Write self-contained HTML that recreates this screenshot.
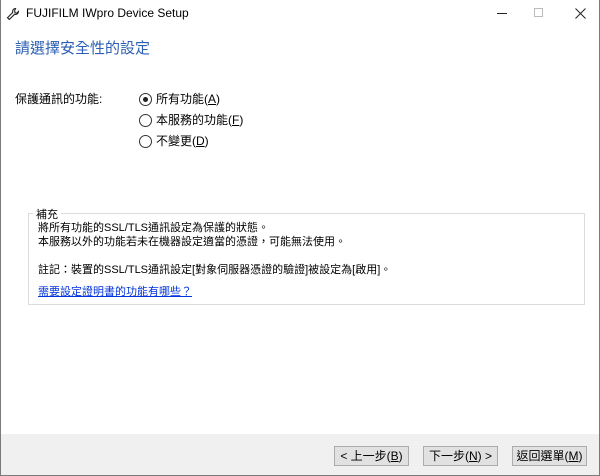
<!DOCTYPE html>
<html><head><meta charset="utf-8"><style>
*{margin:0;padding:0;box-sizing:border-box}
body{width:600px;height:476px;overflow:hidden;background:#fff;font-family:"Liberation Sans","Noto Sans CJK TC",sans-serif;font-size:12px;color:#000;position:relative}
.win{position:absolute;left:0;top:0;width:600px;height:476px;border:1px solid #7a7a7a;border-top:none}
.a{position:absolute;white-space:nowrap}
.radio{position:absolute;width:13px;height:13px;border:1px solid #333;border-radius:50%;background:#fff}
.radio.on::after{content:"";position:absolute;left:3px;top:3px;width:5px;height:5px;border-radius:50%;background:#222}
u{text-decoration:underline}
.footer{position:absolute;left:1px;top:434px;width:598px;height:41px;background:#f0f0f0}
.btn{position:absolute;top:446px;width:75px;height:20px;border:1px solid #adadad;background:#e1e1e1;font-size:12px;text-align:center;line-height:18px}
</style></head><body>
<div class="win"></div>
<svg class="a" style="left:6px;top:7px" width="14" height="14" viewBox="0 0 14 14"><path d="M9.5 1.5a3 3 0 0 0-2.8 4L1.5 10.7l1.8 1.8 5.2-5.2a3 3 0 0 0 4-2.8l-1.7 1.7-1.8-.4-.4-1.8z" fill="none" stroke="#222" stroke-width="1.1"/></svg>
<div class="a" style="left:26px;top:6px;font-size:12px">FUJIFILM IWpro Device Setup</div>
<div class="a" style="left:497px;top:13px;width:10px;height:1px;background:#222"></div>
<div class="a" style="left:534px;top:8px;width:9px;height:9px;border:1px solid #bbb"></div>
<svg class="a" style="left:575px;top:8px" width="11" height="11"><path d="M0.5 0.5l10 10M10.5 0.5l-10 10" stroke="#222" stroke-width="1"/></svg>
<div class="a" style="left:15px;top:37px;font-size:15px;color:#2c5fb4">請選擇安全性的設定</div>
<div class="a" style="left:15px;top:90px">保護通訊的功能:</div>
<div class="radio on" style="left:139px;top:93px"></div>
<div class="a" style="left:156px;top:90px">所有功能(<u>A</u>)</div>
<div class="radio" style="left:139px;top:114px"></div>
<div class="a" style="left:156px;top:111px">本服務的功能(<u>F</u>)</div>
<div class="radio" style="left:139px;top:135px"></div>
<div class="a" style="left:156px;top:132px">不變更(<u>D</u>)</div>
<div class="a" style="left:28px;top:213px;width:557px;height:92px;border:1px solid #dcdcdc"></div>
<div class="a" style="left:33px;top:206px;background:#fff;padding:0 3px;font-size:11px">補充</div>
<div class="a" style="left:38px;top:221px;font-size:11px;line-height:14px">將所有功能的SSL/TLS通訊設定為保護的狀態。<br>本服務以外的功能若未在機器設定適當的憑證，可能無法使用。</div>
<div class="a" style="left:38px;top:261px;font-size:11px">註記：裝置的SSL/TLS通訊設定[對象伺服器憑證的驗證]被設定為[啟用]。</div>
<div class="a" style="left:38px;top:283px;font-size:11px;color:#0033dd;text-decoration:underline">需要設定證明書的功能有哪些？</div>
<div class="footer"></div>
<div class="btn" style="left:334px">&lt; 上一步(<u>B</u>)</div>
<div class="btn" style="left:423px">下一步(<u>N</u>) &gt;</div>
<div class="btn" style="left:512px">返回選單(<u>M</u>)</div>
</body></html>
